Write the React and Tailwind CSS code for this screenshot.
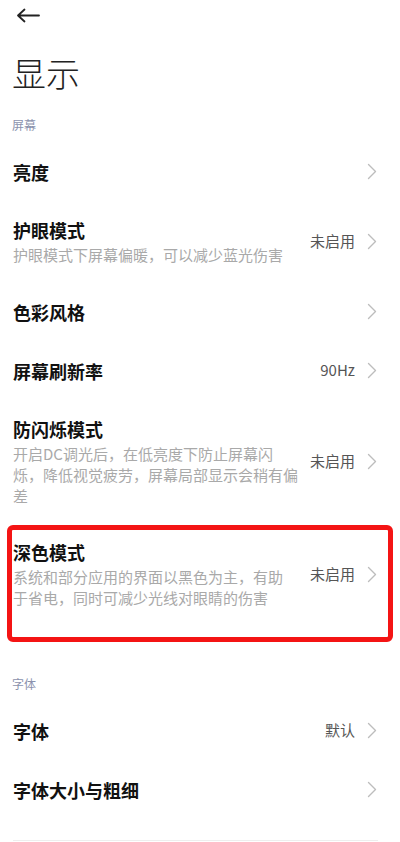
import React from "react";

const screenItems = [
  { title: "亮度" },
  { title: "护眼模式", sub: "护眼模式下屏幕偏暖，可以减少蓝光伤害", value: "未启用" },
  { title: "色彩风格" },
  { title: "屏幕刷新率", value: "90Hz" },
  {
    title: "防闪烁模式",
    sub: "开启DC调光后，在低亮度下防止屏幕闪\n烁，降低视觉疲劳，屏幕局部显示会稍有偏\n差",
    value: "未启用",
  },
  {
    title: "深色模式",
    sub: "系统和部分应用的界面以黑色为主，有助\n于省电，同时可减少光线对眼睛的伤害",
    value: "未启用",
    marked: true,
  },
];

const fontItems = [{ title: "字体", value: "默认" }, { title: "字体大小与粗细" }];

function Chevron() {
  return (
    <svg width="10" height="17" viewBox="0 0 10 17" fill="none" className="shrink-0">
      <path d="M1.5 1.5l7 7-7 7" stroke="#bdbdbd" strokeWidth="1.4" strokeLinecap="round" strokeLinejoin="round" />
    </svg>
  );
}

function Row({ item }) {
  const row = (
    <div
      className={
        "flex items-center justify-between pl-[13px] pr-[23px] " +
        (item.sub ? "py-[17px]" : "h-[59px]")
      }
    >
      <div className="flex flex-col">
        <div className="text-[18px] leading-[24px] font-bold text-[#111111]">{item.title}</div>
        {item.sub && (
          <div className="mt-[2px] text-[15px] leading-[21px] text-[#a9a9a9] whitespace-pre-line">
            {item.sub}
          </div>
        )}
      </div>
      <div className="flex items-center gap-[12px]">
        {item.value && <span className="text-[15px] text-[#555555]">{item.value}</span>}
        <Chevron />
      </div>
    </div>
  );

  if (!item.marked) return row;

  // 红框标注
  return (
    <div className="relative">
      {row}
      <div className="absolute left-[7px] right-[7px] top-[2px] bottom-[-17px] border-[5px] border-[#f41414] rounded-[6px] pointer-events-none" />
    </div>
  );
}

export default function App() {
  return (
    <div
      className="w-full min-h-[842px] bg-white"
      style={{ fontFamily: '"Noto Sans CJK SC", "Noto Sans", sans-serif' }}
    >
      {/* 顶部返回 */}
      <div className="h-[30px] flex items-center pl-[16px]">
        <svg width="25" height="15" viewBox="0 0 25 15" fill="none">
          <path d="M2 7.5h21M8.5 1.5L2 7.5l6.5 6" stroke="#222222" strokeWidth="1.8" strokeLinecap="round" strokeLinejoin="round" />
        </svg>
      </div>

      <h1 className="mt-[23px] pl-[12px] text-[34px] leading-[40px] font-light text-[#222222]">显示</h1>

      <div className="pt-[24px] pb-[9px] pl-[12px] text-[12px] leading-[16px] text-[#8b92ad]">屏幕</div>
      {screenItems.map((it) => (
        <Row key={it.title} item={it} />
      ))}

      <div className="pt-[51px] pb-[9px] pl-[12px] text-[12px] leading-[16px] text-[#8b92ad]">字体</div>
      {fontItems.map((it) => (
        <Row key={it.title} item={it} />
      ))}

      <div className="mt-[21px] ml-[13px] mr-[22px] h-px bg-[#eeeeee]" />
    </div>
  );
}
